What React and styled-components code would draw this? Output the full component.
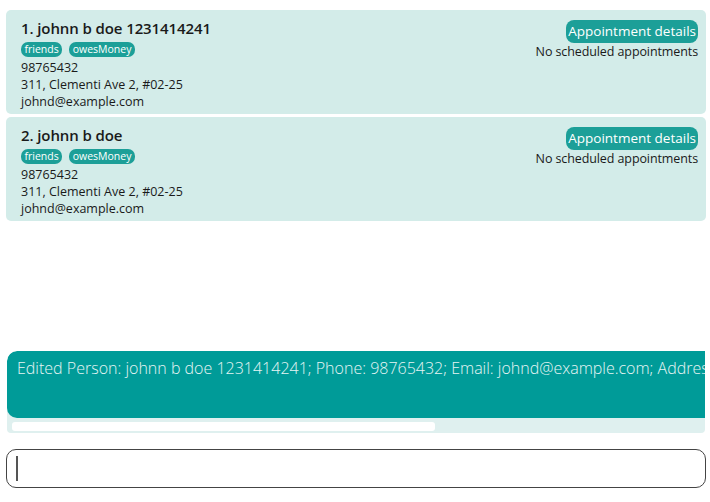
import React from "react";
import styled, { createGlobalStyle } from "styled-components";

const Global = createGlobalStyle`
  html, body { margin: 0; padding: 0; background: #ffffff; }
  body { font-family: "Open Sans", "Noto Sans", sans-serif; color: #1a1a1a; }
  * { box-sizing: border-box; }
`;

const Page = styled.div`
  width: 710px;
  height: 502px;
  display: flex;
  flex-direction: column;
  padding: 10px 4px 0 6px;
`;

const ListPane = styled.div`
  height: 341px;
  display: flex;
  flex-direction: column;
  gap: 3px;
`;

const Card = styled.div`
  height: 104px;
  background: #d3ece9;
  border-radius: 5px;
  display: flex;
  justify-content: space-between;
  padding: 8px 8px 0 15px;
`;

const Left = styled.div`
  display: flex;
  flex-direction: column;
`;

const Name = styled.div`
  font-size: 15px;
  font-weight: 600;
  line-height: 20px;
  color: #1a1a1a;
  letter-spacing: -0.1px;
`;

const Tags = styled.div`
  display: flex;
  gap: 7px;
  margin-top: 4px;
  margin-bottom: 2px;
`;

const Tag = styled.span`
  background: #1c9f98;
  color: #ffffff;
  font-size: 10.5px;
  line-height: 15px;
  height: 15px;
  padding: 0 3.5px;
  border-radius: 7px;
`;

const Line = styled.div`
  font-size: 12.5px;
  line-height: 17px;
  color: #1a1a1a;
`;

const Right = styled.div`
  display: flex;
  flex-direction: column;
  align-items: flex-end;
  padding-top: 2px;
`;

const Pill = styled.span`
  background: #1c9f98;
  color: #ffffff;
  font-size: 13.5px;
  line-height: 23px;
  height: 23px;
  padding: 0 2px;
  border-radius: 8px;
`;

const Note = styled.div`
  font-size: 12.5px;
  line-height: 18px;
  color: #1a1a1a;
  letter-spacing: -0.1px;
`;

const ResultWrap = styled.div`
  margin: 0 1px 0 1px;
  overflow: hidden;
  border-radius: 10px 0 4px 4px;
  background: #dff0ef;
`;

const ResultBox = styled.div`
  height: 67px;
  background: #009b98;
  border-radius: 10px 0 0 10px;
  color: #e6f5f4;
  font-size: 16px;
  font-weight: 300;
  white-space: nowrap;
  overflow: hidden;
  padding: 7px 0 0 10px;
  line-height: 20px;
`;

const Track = styled.div`
  height: 15px;
  padding: 4px 0 2px 5px;
`;

const Thumb = styled.div`
  width: 423px;
  height: 9px;
  background: #ffffff;
  border-radius: 3px;
`;

const Command = styled.div`
  margin-top: 16px;
  height: 39px;
  border: 1.5px solid #444444;
  border-radius: 10px;
  display: flex;
  align-items: center;
  padding-left: 9px;
`;

const Caret = styled.div`
  width: 1.5px;
  height: 25px;
  background: #555555;
`;

const people = [
  { name: "1. johnn b doe 1231414241" },
  { name: "2. johnn b doe" },
];

export default function App() {
  return (
    <>
      <Global />
      <Page>
        <ListPane>
          {people.map((p) => (
            <Card key={p.name}>
              <Left>
                <Name>{p.name}</Name>
                <Tags>
                  <Tag>friends</Tag>
                  <Tag>owesMoney</Tag>
                </Tags>
                <Line>98765432</Line>
                <Line>311, Clementi Ave 2, #02-25</Line>
                <Line>johnd@example.com</Line>
              </Left>
              <Right>
                <Pill>Appointment details</Pill>
                <Note>No scheduled appointments</Note>
              </Right>
            </Card>
          ))}
        </ListPane>
        <ResultWrap>
          <ResultBox>
            Edited Person: johnn b doe 1231414241; Phone: 98765432; Email: johnd@example.com; Address: 311, Clementi Ave 2, #02-25; Tags: [friends][owesMoney]
          </ResultBox>
          <Track>
            <Thumb />
          </Track>
        </ResultWrap>
        <Command>
          <Caret />
        </Command>
      </Page>
    </>
  );
}
